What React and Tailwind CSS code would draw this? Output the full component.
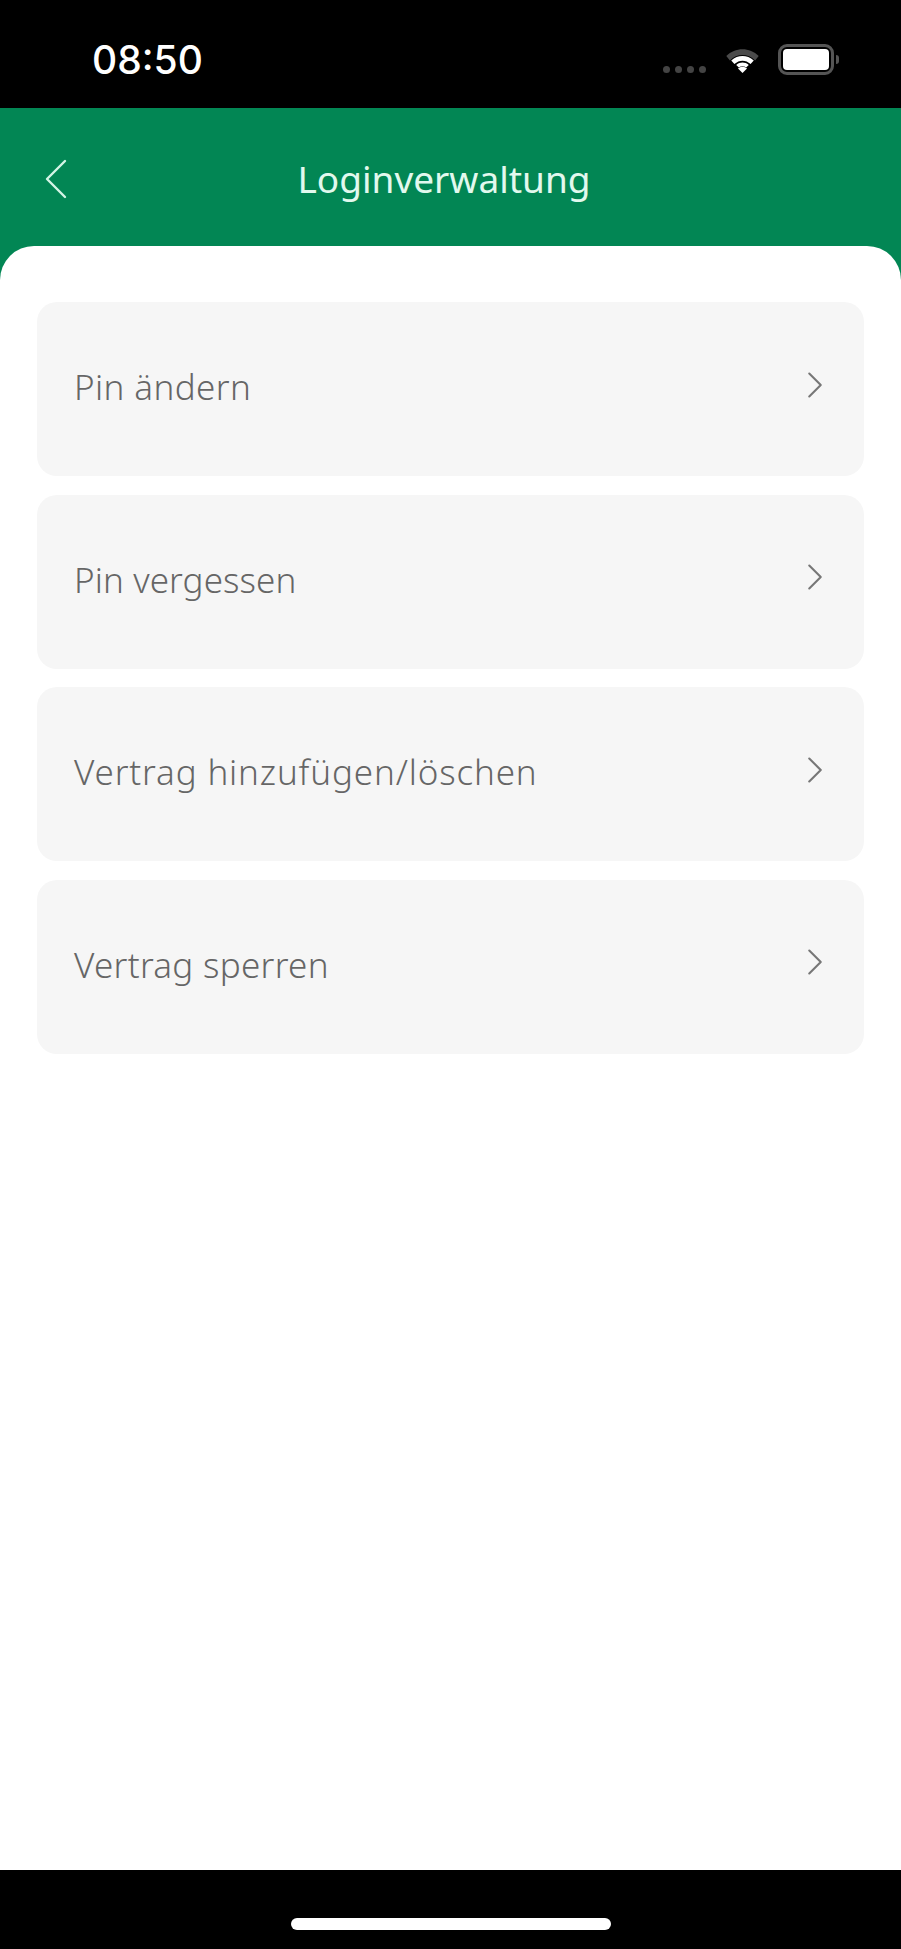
import { ChevronLeft, ChevronRight } from 'lucide-react';

const rows = [
  { label: 'Pin ändern', tracking: 'tracking-[0.4px]' },
  { label: 'Pin vergessen', tracking: 'tracking-[0.1px]' },
  { label: 'Vertrag hinzufügen/löschen', tracking: 'tracking-[0.85px]' },
  { label: 'Vertrag sperren', tracking: 'tracking-[0.3px]' },
];

function WifiIcon() {
  return (
    <svg width="37" height="27" viewBox="0 0 38 30" className="block">
      <path d="M1 11 C11 1 27 1 37 11 L33 16 C25 8 13 8 5 16 Z" fill="#4a4a4a" />
      <path d="M6.5 16 C14 9.5 24 9.5 31.5 16 L28 20 C22.5 15 15.5 15 10 20 Z" fill="#fff" />
      <path d="M12 21 C16.5 17.5 21.5 17.5 26 21 L23 24 C20.5 22 17.5 22 15 24 Z" fill="#fff" />
      <path d="M14 25 C17 22.5 21 22.5 24 25 L19 30 Z" fill="#fff" />
    </svg>
  );
}

function StatusBar() {
  return (
    <div className="flex h-[108px] items-start justify-between bg-black pl-[92px] pr-[62px] text-white">
      <span className="mt-[38px] text-[39px] leading-[44px] font-['Inter',sans-serif] font-medium">08:50</span>
      <div className="mt-[44px] flex items-center">
        <div className="mt-[20px] flex gap-[5px]">
          <span className="size-[7px] rounded-full bg-[#444]" />
          <span className="size-[7px] rounded-full bg-[#444]" />
          <span className="size-[7px] rounded-full bg-[#444]" />
          <span className="size-[7px] rounded-full bg-[#444]" />
        </div>
        <div className="ml-[18px]">
          <WifiIcon />
        </div>
        <div className="ml-[17px] flex items-center">
          <div className="flex h-[31px] w-[56px] rounded-[9px] border-[3px] border-[#555] p-[2px]">
            <div className="flex-1 rounded-[4px] bg-white" />
          </div>
          <div className="ml-[2px] h-[9px] w-[3px] rounded-r-full bg-[#555]" />
        </div>
      </div>
    </div>
  );
}

export default function App() {
  return (
    <div className="flex h-[1949px] w-[901px] flex-col overflow-hidden bg-black font-['Noto_Sans',sans-serif]">
      <StatusBar />
      <div className="flex-1 bg-[#028654]">
        <header className="relative flex h-[138px] items-center justify-center pr-[13px] pt-[3px]">
          <ChevronLeft className="absolute left-[20px] top-[35px] text-[#d4f5e6]" size={72} strokeWidth={0.8} />
          <h1 className="text-[37px] text-[#e2f9ee]">Loginverwaltung</h1>
        </header>
        <main className="flex h-[1624px] flex-col gap-[18.5px] rounded-t-[34px] bg-white px-[37px] pt-[56px]">
          {rows.map((row) => (
            <div key={row.label} className="flex h-[174px] items-center justify-between rounded-[20px] bg-[#f6f6f6] pr-[26px] pl-[37px]">
              <span className={`mb-[3px] text-[35px] font-light text-[#666] ${row.tracking}`}>{row.label}</span>
              <ChevronRight className="mb-[9px] text-[#777]" size={46} strokeWidth={1.1} />
            </div>
          ))}
        </main>
      </div>
      <div className="flex h-[79px] shrink-0 items-start justify-center bg-black pt-[48px]">
        <div className="h-[12px] w-[320px] rounded-full bg-white" />
      </div>
    </div>
  );
}
